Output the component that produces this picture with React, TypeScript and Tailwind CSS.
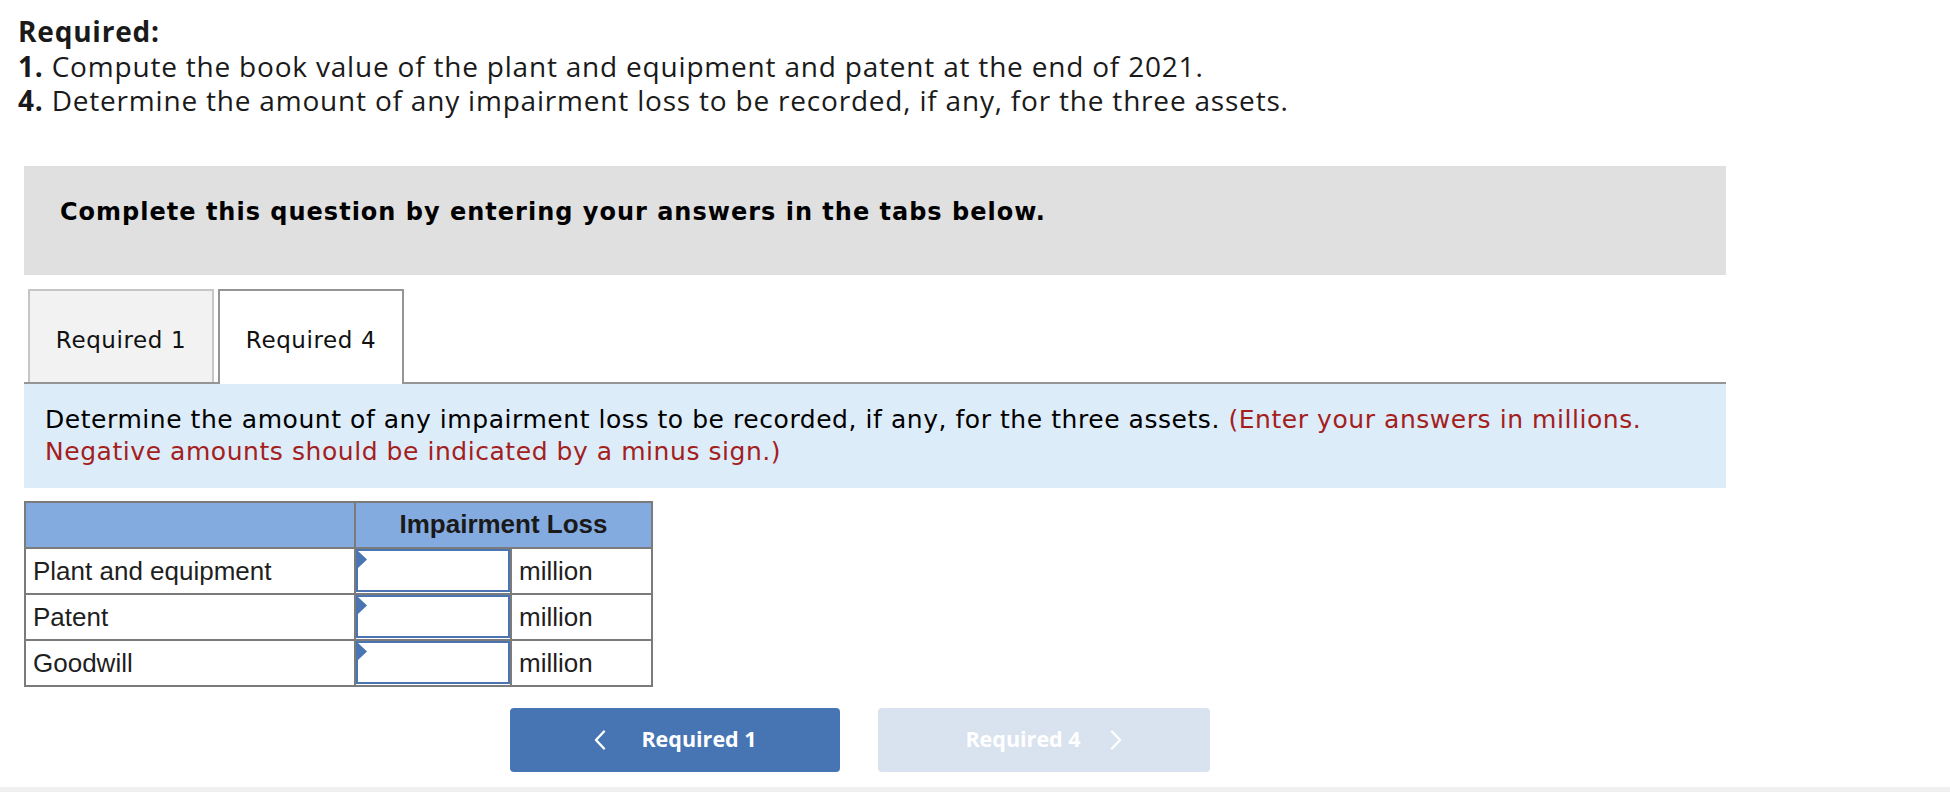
import React from "react";

const Chevron = ({ dir }: { dir: "left" | "right" }) => (
  <svg width="14" height="20" viewBox="0 0 14 20" fill="none">
    {dir === "left" ? (
      <polyline points="11,1.5 3,10 11,18.5" stroke="white" strokeWidth="2.4" strokeLinecap="round" strokeLinejoin="round" />
    ) : (
      <polyline points="3,1.5 11,10 3,18.5" stroke="white" strokeWidth="2.4" strokeLinecap="round" strokeLinejoin="round" />
    )}
  </svg>
);

const InputCell = () => (
  <td className="border-2 border-[#7b7b7b] p-0 h-[46px]">
    <div className="relative h-[43px] w-full border-2 border-[#4a74b2] bg-white">
      <svg className="absolute left-0 top-0" width="10" height="17" viewBox="0 0 10 17">
        <polygon points="0,0 9,8.5 0,17" fill="#4a74b2" />
      </svg>
    </div>
  </td>
);

export default function App() {
  const rows = ["Plant and equipment", "Patent", "Goodwill"];
  return (
    <div className="w-[1950px] h-[792px] bg-white overflow-hidden flex flex-col">
      <div className="pl-[18px] pt-[14px] text-[28px] leading-[34.5px] tracking-[0.8px] text-[#1a1a1a] font-['Open_Sans',sans-serif]">
        <div className="font-bold">Required:</div>
        <div>
          <span className="font-bold">1.</span> Compute the book value of the plant and equipment and patent at the end of 2021.
        </div>
        <div>
          <span className="font-bold">4.</span> Determine the amount of any impairment loss to be recorded, if any, for the three assets.
        </div>
      </div>

      <div className="ml-[24px] w-[1702px] mt-[48px] font-['DejaVu_Sans',Verdana,sans-serif]">
        <div className="h-[109px] bg-[#e0e0e0] pl-[36px] pt-[31px] text-[24px] tracking-[1px] leading-[30px] font-bold text-black">
          Complete this question by entering your answers in the tabs below.
        </div>

        <div className="mt-[14px] flex items-end pl-[4px] border-b-2 border-[#959595]">
          <div className="w-[186px] h-[93px] bg-[#f2f2f2] border-2 border-b-0 border-[#c6c6c6] flex items-center justify-center pt-[8px] text-[23px] tracking-[0.6px] text-[#111]">
            Required 1
          </div>
          <div className="ml-[4px] w-[186px] h-[95px] -mb-[2px] bg-white border-2 border-b-0 border-[#959595] flex items-center justify-center pt-[6px] text-[23px] tracking-[0.6px] text-[#111]">
            Required 4
          </div>
        </div>

        <div className="h-[104px] bg-[#ddecf9] pl-[21px] pt-[20px] text-[25px] tracking-[0.55px] leading-[32px] text-black">
          Determine the amount of any impairment loss to be recorded, if any, for the three assets.{" "}
          <span className="text-[#a3201d]">
            (Enter your answers in millions.
            <br />
            Negative amounts should be indicated by a minus sign.)
          </span>
        </div>

        <table className="mt-[13px] border-collapse border-2 border-[#7b7b7b] font-['Liberation_Sans',Arial,sans-serif] text-[26px] text-[#1f1f1f] table-fixed w-[627px]">
          <colgroup>
            <col className="w-[330px]" />
            <col className="w-[156px]" />
            <col className="w-[141px]" />
          </colgroup>
          <thead>
            <tr className="bg-[#84abe0] h-[46px]">
              <th className="border-2 border-[#7b7b7b]"></th>
              <th colSpan={2} className="border-2 border-[#7b7b7b] font-bold text-center text-[#1a1a1a]">
                Impairment Loss
              </th>
            </tr>
          </thead>
          <tbody>
            {rows.map((r) => (
              <tr key={r} className="h-[46px]">
                <td className="border-2 border-[#7b7b7b] pl-[7px] leading-[40px]">{r}</td>
                <InputCell />
                <td className="border-2 border-[#7b7b7b] pl-[7px] leading-[40px]">million</td>
              </tr>
            ))}
          </tbody>
        </table>

        <div className="mt-[21px] ml-[486px] flex gap-[38px] font-['Open_Sans',sans-serif] font-bold text-[21.5px] text-white">
          <button className="w-[330px] h-[64px] rounded-[4px] bg-[#4775b3] flex items-center justify-center gap-[34px]">
            <Chevron dir="left" />
            <span>Required 1</span>
          </button>
          <button className="w-[332px] h-[64px] rounded-[4px] bg-[#d9e3ef] flex items-center justify-center gap-[28px]">
            <span>Required 4</span>
            <Chevron dir="right" />
          </button>
        </div>
      </div>

      <div className="mt-auto h-[5px] bg-[#f0f0f0]"></div>
    </div>
  );
}
